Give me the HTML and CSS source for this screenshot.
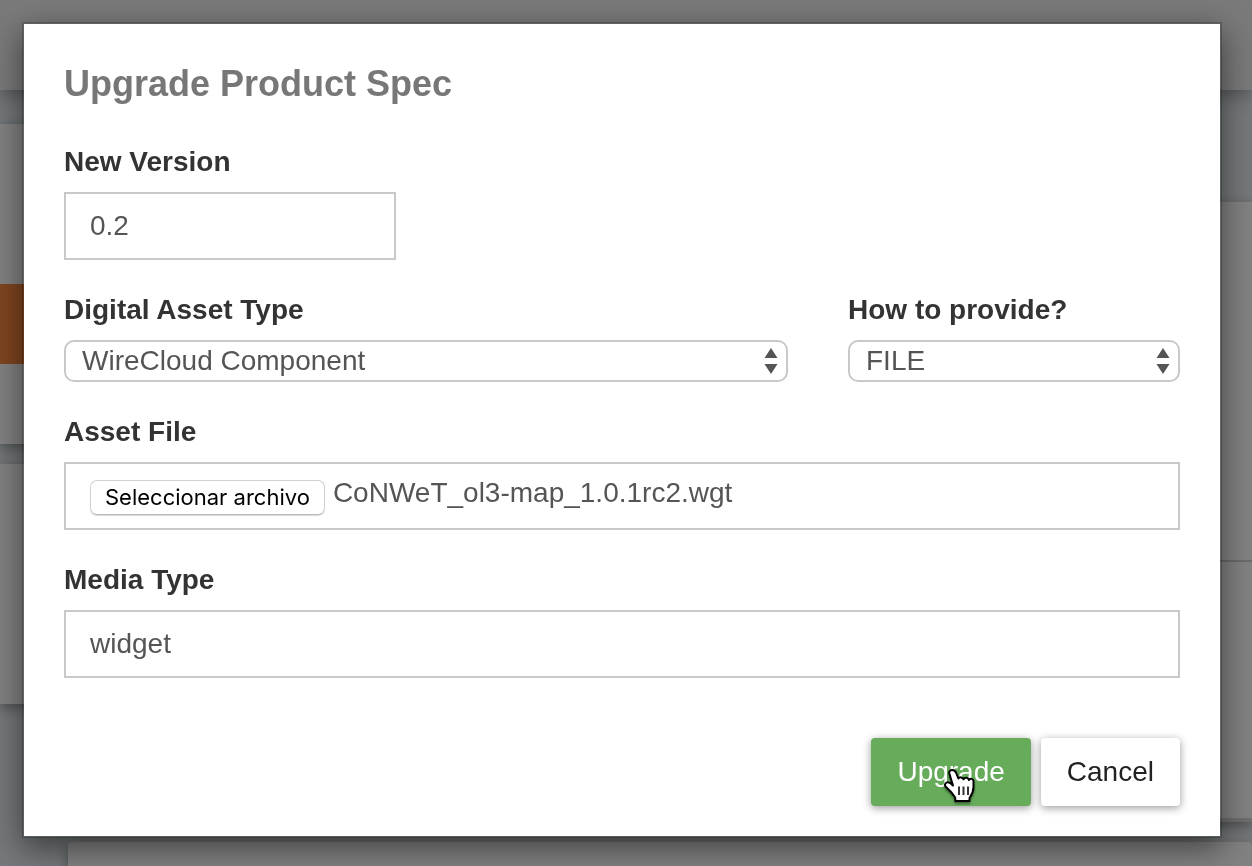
FILE: index.html
```
<!DOCTYPE html>
<html lang="en">
<head>
  <meta charset="UTF-8" />
  <meta name="viewport" content="width=device-width, initial-scale=1.0"/>
  <title>Upgrade Product Spec</title>
  <link rel="stylesheet" href="styles.css">
</head>
<body>

  <!-- PAGE BEHIND THE DIALOG -->
  <div class="page" aria-hidden="true">
    <div class="topbar"></div>
    <div class="columns">
      <div class="sidebar">
        <div class="panel menu">
          <div class="menu-active"></div>
        </div>
        <div class="panel filters"></div>
      </div>
      <div class="content">
        <div class="panel details">
          <div class="details-head"></div>
          <div class="details-foot"></div>
        </div>
        <div class="panel more"></div>
      </div>
    </div>
  </div>

  <!-- DIALOG -->
  <div class="overlay">
    <form class="modal" role="dialog" aria-labelledby="modal-title">
      <h2 class="modal-title" id="modal-title">Upgrade Product Spec</h2>

      <div class="row">
        <div class="field">
          <label for="version">New Version</label>
          <input type="text" class="text-input" id="version" value="0.2" />
        </div>
      </div>

      <div class="row">
        <div class="field wide">
          <label for="asset-type">Digital Asset Type</label>
          <div class="select-box">
            <select id="asset-type">
              <option>WireCloud Component</option>
            </select>
            <svg class="arrows" viewBox="0 0 14 26" aria-hidden="true">
              <path d="M7 0L13.500 10H0.500zM7 26L0.500 16H13.500z" />
            </svg>
          </div>
        </div>
        <div class="field">
          <label for="provide">How to provide?</label>
          <div class="select-box">
            <select id="provide">
              <option>FILE</option>
            </select>
            <svg class="arrows" viewBox="0 0 14 26" aria-hidden="true">
              <path d="M7 0L13.500 10H0.500zM7 26L0.500 16H13.500z" />
            </svg>
          </div>
        </div>
      </div>

      <div class="row">
        <div class="field full">
          <label for="asset-file">Asset File</label>
          <div class="file-box">
            <input type="file" class="file-input" id="asset-file" />
            <label class="file-btn" for="asset-file">Seleccionar archivo</label>
            <span class="file-name">CoNWeT_ol3-map_1.0.1rc2.wgt</span>
          </div>
        </div>
      </div>

      <div class="row">
        <div class="field full">
          <label for="media-type">Media Type</label>
          <input type="text" class="text-input" id="media-type" value="widget" />
        </div>
      </div>

      <div class="modal-footer">
        <button type="button" class="btn btn-success">
          Upgrade
          <svg class="pointer" viewBox="0 0 32 36" aria-hidden="true">
            <path d="M9 2C6.800 2 5.800 3.800 6.400 5.800L10 17.500C8.200 15.500 5.600 13.800 3.500 14.600C1.500 15.500 1.600 17.500 3 19L8.500 24.500C10.300 27.500 12.300 28.500 12.300 30.500V33H26.500V30C28.500 27 30.500 24.500 30.500 19V13.500C30.500 10.500 27 10 26 12C25.500 9.500 21.500 9 20.600 11.300C19.700 9 16.500 8.800 15.400 10.500L13 4.500C12.200 2.800 11 2 9 2Z" />
            <path class="pointer-lines" d="M16 18.500V27M20.500 18.500V27M25 18.500V27" />
          </svg>
        </button>
        <button type="button" class="btn btn-default">Cancel</button>
      </div>
    </form>
  </div>

</body>
</html>
```
FILE: styles.css
```
* {
  box-sizing: border-box;
}

body {
  margin: 0;
  font-family: "Liberation Sans", Arial, sans-serif;
  font-size: 28px;
  background-color: #75797b;
  color: #333;
}

.page {
  height: 100vh;
  overflow: hidden;
}

.topbar {
  position: relative;
  height: 90px;
  background-color: #7a7a7a;
  box-shadow: 0 2px 20px rgba(0, 0, 0, 0.4);
}

.columns {
  display: flex;
  gap: 20px;
}

.sidebar {
  width: 48px;
  padding-top: 34px;
}

.content {
  flex: 1;
  padding-top: 112px;
}

.panel {
  margin-bottom: 20px;
  background-color: #828282;
  box-shadow: 0 4px 12px rgba(0, 0, 0, 0.35);
}

.menu {
  height: 320px;
  padding-top: 160px;
}

.menu-active {
  height: 80px;
  background-color: #814521;
}

.filters {
  height: 240px;
}

.details-head {
  height: 360px;
  border-bottom: 2px solid #6b6b6b;
}

.details-foot {
  height: 260px;
  border-bottom: 4px solid #6e6e6e;
}

.more {
  height: 200px;
  border-radius: 4px;
}

.overlay {
  position: fixed;
  top: 0;
  right: 0;
  bottom: 0;
  left: 0;
  overflow: auto;
  padding: 22px 30px 22px 22px;
}

.modal {
  padding: 40px 40px 30px;
  background-color: #fff;
  background-clip: padding-box;
  border: 2px solid rgba(0, 0, 0, 0.2);
  box-shadow: 0 10px 30px rgba(0, 0, 0, 0.5);
}

.modal-title {
  margin: 0 0 38px;
  font-size: 36px;
  line-height: 40px;
  font-weight: bold;
  color: #777;
}

.row {
  display: grid;
  grid-template-columns: repeat(3, 1fr);
  column-gap: 60px;
  margin-bottom: 30px;
}

.wide {
  grid-column: span 2;
}

.full {
  grid-column: span 3;
}

.field > label {
  display: block;
  margin-bottom: 10px;
  line-height: 40px;
  font-weight: bold;
}

.text-input,
.file-box {
  display: block;
  width: 100%;
  height: 68px;
  padding: 0 24px;
  border: 2px solid #c8c8c8;
  border-radius: 0;
  background-color: #fff;
  font-family: inherit;
  font-size: 28px;
  color: #555;
}

.select-box {
  position: relative;
}

select {
  display: block;
  width: 100%;
  height: 42px;
  padding: 0 40px 2px 16px;
  appearance: none;
  border: 2px solid #c8c8c8;
  border-radius: 10px;
  background-color: #fff;
  font-family: inherit;
  font-size: 28px;
  color: #555;
}

.arrows {
  position: absolute;
  top: 8px;
  right: 10px;
  width: 14px;
  height: 26px;
  fill: #555;
  pointer-events: none;
}

.file-box {
  display: flex;
  align-items: flex-start;
  gap: 8px;
  padding-top: 16px;
}

.file-input {
  position: absolute;
  width: 1px;
  height: 1px;
  opacity: 0;
}

.file-btn {
  padding: 0 14px;
  border: 1px solid #d0d0d0;
  border-bottom-color: #b8b8b8;
  border-radius: 7px;
  box-shadow: 0 1px 1px rgba(0, 0, 0, 0.15);
  font-family: Inter, Roboto, sans-serif;
  font-size: 22px;
  line-height: 33px;
  color: #000;
  cursor: pointer;
}

.file-name {
  line-height: 26px;
}

.modal-footer {
  display: flex;
  justify-content: flex-end;
  gap: 10px;
  margin-top: 60px;
}

.btn {
  position: relative;
  height: 68px;
  padding: 0 26px;
  border: none;
  border-radius: 4px;
  box-shadow: 0 2px 8px rgba(0, 0, 0, 0.4);
  font-family: inherit;
  font-size: 28px;
  cursor: pointer;
}

.btn-success {
  background-color: #67ac5b;
  color: #fff;
}

.btn-default {
  background-color: #fff;
  color: #222;
}

.pointer {
  position: absolute;
  top: 30px;
  left: 72px;
  width: 32px;
  height: 36px;
  fill: #fff;
  stroke: #000;
  stroke-width: 2;
  stroke-linejoin: round;
  filter: drop-shadow(0 2px 1px rgba(0, 0, 0, 0.4));
}

.pointer-lines {
  stroke: #333;
}
```
